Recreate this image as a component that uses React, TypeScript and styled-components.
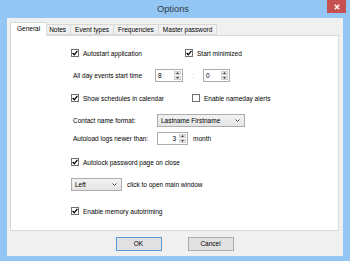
import React from 'react';
import styled, { createGlobalStyle } from 'styled-components';

const Global = createGlobalStyle`
  html, body { margin: 0; padding: 0; background: #93c6f2; }
  body { font-family: "Liberation Sans", Arial, sans-serif; }
`;

const Window = styled.div`
  width: 350px;
  height: 261px;
  box-sizing: border-box;
  background: #93c6f2;
  display: flex;
  flex-direction: column;
  padding: 0 7px 5px 7px;
  font-family: "Liberation Sans", Arial, sans-serif;
  font-size: 6.5px;
  color: #000;
  overflow: hidden;
`;

const TitleBar = styled.div`
  height: 18px;
  margin: 0 -7px;
  padding-right: 4px;
  display: grid;
  grid-template-columns: 1fr auto 1fr;
  align-items: start;
`;

const Title = styled.div`
  grid-column: 2;
  font-size: 9.3px;
  line-height: 18px;
  color: #2e3b48;
`;

const CloseButton = styled.div`
  grid-column: 3;
  justify-self: end;
  width: 19px;
  height: 13px;
  background: #c75050;
  display: flex;
  align-items: center;
  justify-content: center;
`;

const Client = styled.div`
  flex: 1;
  background: #f0f0f0;
  display: flex;
  flex-direction: column;
  padding: 4px 4px 0 3px;
`;

const TabStrip = styled.div`
  height: 13px;
  display: flex;
  align-items: flex-end;
  padding-left: 2px;
  position: relative;
  z-index: 1;
`;

const Tab = styled.div<{ $active?: boolean }>`
  box-sizing: border-box;
  height: ${(p) => (p.$active ? '14px' : '11px')};
  margin: ${(p) => (p.$active ? '0 -2px -1px -2px' : '0 0 0 -1px')};
  padding: ${(p) => (p.$active ? '0 6px' : '0 4px')};
  border: 1px solid #d9d9d9;
  border-bottom: ${(p) => (p.$active ? 'none' : '1px solid #d9d9d9')};
  background: ${(p) => (p.$active ? '#ffffff' : '#f0f0f0')};
  display: flex;
  align-items: center;
  padding-bottom: ${(p) => (p.$active ? '3px' : '0')};
  white-space: nowrap;
  position: relative;
  z-index: ${(p) => (p.$active ? 2 : 1)};
  &:first-child { margin-left: ${(p) => (p.$active ? '-2px' : '0')}; }
`;

const Panel = styled.div`
  box-sizing: border-box;
  height: 196px;
  background: #ffffff;
  border: 1px solid #d9d9d9;
  display: flex;
  flex-direction: column;
  padding: 10px 0 0 60px;
`;

const Row = styled.div<{ $mt?: number }>`
  display: flex;
  align-items: center;
  height: 14px;
  margin-top: ${(p) => p.$mt ?? 0}px;
  white-space: nowrap;
`;

const CheckItem = styled.div<{ $w?: number }>`
  display: flex;
  align-items: center;
  gap: 4px;
  width: ${(p) => (p.$w ? `${p.$w}px` : 'auto')};
`;

const Box = styled.div`
  box-sizing: border-box;
  width: 8px;
  height: 8px;
  border: 1px solid #707070;
  background: #ffffff;
  display: flex;
  align-items: center;
  justify-content: center;
`;

const Label = styled.div<{ $w: number }>`
  width: ${(p) => p.$w}px;
  margin-left: 2px;
`;

const Text = styled.div<{ $ml?: number }>`
  margin-left: ${(p) => p.$ml ?? 0}px;
`;

const Colon = styled.div`
  width: 20px;
  text-align: center;
  color: #c4a898;
`;

const Spinner = styled.div<{ $w: number; $right?: boolean }>`
  box-sizing: border-box;
  width: ${(p) => p.$w}px;
  height: 13px;
  border: 1px solid #abadb3;
  background: #ffffff;
  display: flex;
  align-items: stretch;
`;

const SpinValue = styled.div<{ $right?: boolean }>`
  flex: 1;
  display: flex;
  align-items: center;
  justify-content: ${(p) => (p.$right ? 'flex-end' : 'flex-start')};
  padding: 0 2px;
`;

const SpinButtons = styled.div`
  width: 7px;
  margin: 1px;
  display: flex;
  flex-direction: column;
  gap: 1px;
`;

const SpinHalf = styled.div`
  flex: 1;
  background: #e6e6e6;
  border: 1px solid #cfcfcf;
  box-sizing: border-box;
  display: flex;
  align-items: center;
  justify-content: center;
`;

const Combo = styled.div<{ $w: number }>`
  box-sizing: border-box;
  width: ${(p) => p.$w}px;
  height: 13px;
  border: 1px solid #acacac;
  background: linear-gradient(#f2f2f2, #e5e5e5);
  display: flex;
  align-items: center;
  justify-content: space-between;
  padding: 0 4px 0 3px;
`;

const ButtonRow = styled.div`
  flex: 1;
  display: flex;
  align-items: center;
  justify-content: center;
  gap: 26px;
`;

const Button = styled.div<{ $default?: boolean }>`
  box-sizing: border-box;
  width: 46px;
  height: 14px;
  border: 1px solid ${(p) => (p.$default ? '#5a9ad6' : '#adadad')};
  background: #e1e1e1;
  display: flex;
  align-items: center;
  justify-content: center;
`;

const Check = () => (
  <svg width="6" height="6" viewBox="0 0 6 6">
    <path d="M0.6 3 L2.3 4.8 L5.4 0.9" stroke="#000" strokeWidth="1.3" fill="none" />
  </svg>
);

const CheckBox: React.FC<{ checked?: boolean; label: string; w?: number }> = ({ checked, label, w }) => (
  <CheckItem $w={w}>
    <Box>{checked && <Check />}</Box>
    <span>{label}</span>
  </CheckItem>
);

const Arrow: React.FC<{ up?: boolean }> = ({ up }) => (
  <svg width="3" height="2" viewBox="0 0 3 2">
    <path d={up ? 'M0 2 L1.5 0 L3 2 Z' : 'M0 0 L1.5 2 L3 0 Z'} fill="#444" />
  </svg>
);

const Spin: React.FC<{ w: number; value: string; right?: boolean }> = ({ w, value, right }) => (
  <Spinner $w={w}>
    <SpinValue $right={right}>{value}</SpinValue>
    <SpinButtons>
      <SpinHalf><Arrow up /></SpinHalf>
      <SpinHalf><Arrow /></SpinHalf>
    </SpinButtons>
  </Spinner>
);

const Chevron = () => (
  <svg width="5" height="3" viewBox="0 0 5 3">
    <path d="M0.5 0.5 L2.5 2.5 L4.5 0.5" stroke="#444" strokeWidth="1" fill="none" />
  </svg>
);

const Select: React.FC<{ w: number; value: string }> = ({ w, value }) => (
  <Combo $w={w}>
    <span>{value}</span>
    <Chevron />
  </Combo>
);

export default function App() {
  return (
    <>
      <Global />
      <Window>
        <TitleBar>
          <Title>Options</Title>
          <CloseButton>
            <svg width="6" height="6" viewBox="0 0 6 6">
              <path d="M0.8 0.8 L5.2 5.2 M5.2 0.8 L0.8 5.2" stroke="#fff" strokeWidth="1.4" />
            </svg>
          </CloseButton>
        </TitleBar>
        <Client>
          <TabStrip>
            <Tab $active>General</Tab>
            <Tab>Notes</Tab>
            <Tab>Event types</Tab>
            <Tab>Frequencies</Tab>
            <Tab>Master password</Tab>
          </TabStrip>
          <Panel>
            <Row>
              <CheckBox checked w={114} label="Autostart application" />
              <CheckBox checked label="Start minimized" />
            </Row>
            <Row $mt={8}>
              <Label $w={82}>All day events start time</Label>
              <Spin w={28} value="8" />
              <Colon>:</Colon>
              <Spin w={27} value="0" />
            </Row>
            <Row $mt={9}>
              <CheckBox checked w={121} label="Show schedules in calendar" />
              <CheckBox label="Enable nameday alerts" />
            </Row>
            <Row $mt={8}>
              <Label $w={84}>Contact name format:</Label>
              <Select w={88} value="Lastname Firstname" />
            </Row>
            <Row $mt={4}>
              <Label $w={84}>Autoload logs newer than:</Label>
              <Spin w={31} value="3" right />
              <Text $ml={5}>month</Text>
            </Row>
            <Row $mt={10}>
              <CheckBox checked label="Autolock password page on close" />
            </Row>
            <Row $mt={8}>
              <Select w={51} value="Left" />
              <Text $ml={5}>click to open main window</Text>
            </Row>
            <Row $mt={13}>
              <CheckBox checked label="Enable memory autotriming" />
            </Row>
          </Panel>
          <ButtonRow>
            <Button $default>OK</Button>
            <Button>Cancel</Button>
          </ButtonRow>
        </Client>
      </Window>
    </>
  );
}
